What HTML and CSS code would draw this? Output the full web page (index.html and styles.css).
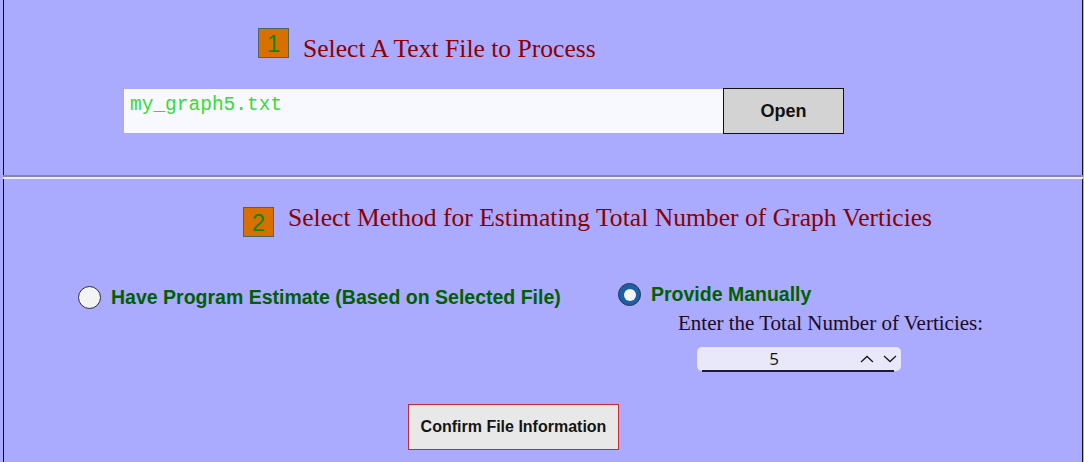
FILE: index.html
```html
<!DOCTYPE html>
<html lang="en">
<head>
<meta charset="utf-8">
<title>Graph File</title>
<link rel="stylesheet" href="styles.css">
</head>
<body>
<div class="page">
  <section class="sec sec1">
    <div class="step step1">
      <span class="badge">1</span>
      <span class="step-title">Select A Text File to Process</span>
    </div>
    <div class="file-row">
      <div class="file-field">my_graph5.txt</div>
      <button class="open-btn" type="button">Open</button>
    </div>
  </section>
  <div class="sep"></div>
  <section class="sec sec2">
    <div class="step step2">
      <span class="badge">2</span>
      <span class="step-title">Select Method for Estimating Total Number of Graph Verticies</span>
    </div>
    <div class="options">
      <div class="opt opt1">
        <span class="radio"></span>
        <span class="opt-label">Have Program Estimate (Based on Selected File)</span>
      </div>
      <div class="opt2">
        <div class="opt">
          <span class="radio checked"><span class="dot"></span></span>
          <span class="opt-label">Provide Manually</span>
        </div>
        <div class="enter-label">Enter the Total Number of Verticies:</div>
        <div class="num">
          <span class="num-val">5</span>
          <span class="spin">
            <svg width="14" height="8" viewBox="0 0 14 8"><polyline points="1,7 7,1.5 13,7" fill="none" stroke="#1a1a1a" stroke-width="1.3"/></svg>
            <svg width="14" height="8" viewBox="0 0 14 8"><polyline points="1,1 7,6.5 13,1" fill="none" stroke="#1a1a1a" stroke-width="1.3"/></svg>
          </span>
        </div>
      </div>
    </div>
    <button class="confirm-btn" type="button">Confirm File Information</button>
  </section>
</div>
</body>
</html>
```
FILE: styles.css
```css
html, body {
  margin: 0;
  padding: 0;
  background: #aaaaff;
}
body {
  height: 462px;
  overflow: hidden;
}
.page {
  margin-left: 3px;
  width: 1080px;
}
.sec {
  border-left: 1px solid #111;
  border-right: 1px solid #111;
  box-sizing: border-box;
}
.sec1 {
  height: 175px;
  padding-top: 28px;
}
.sep {
  height: 4px;
  box-sizing: border-box;
  border-top: 2px solid #8585a6;
  border-bottom: 2px solid #ececff;
}
.sec2 {
  height: 283px;
  padding-top: 28px;
}
.step {
  display: flex;
  align-items: flex-start;
  height: 30px;
}
.step1 { margin-left: 254px; }
.step2 { margin-left: 239px; }
.badge {
  box-sizing: border-box;
  flex: 0 0 31px;
  width: 31px;
  height: 30px;
  background: #d87000;
  border: 1px solid #4d6464;
  color: #0a8a0a;
  font-family: "Liberation Sans", Arial, sans-serif;
  font-size: 24px;
  line-height: 27px;
  padding-top: 1px;
  text-align: center;
}
.step-title {
  font-family: "Liberation Serif", "Times New Roman", serif;
  font-size: 25.6px;
  line-height: 29px;
  color: #8b0000;
  white-space: nowrap;
}
.step1 .step-title { margin-left: 14px; margin-top: 6px; }
.step2 .step-title { margin-left: 14px; margin-top: -4px; }

.file-row {
  display: flex;
  align-items: center;
  margin-left: 120px;
  margin-top: 30px;
}
.file-field {
  box-sizing: border-box;
  width: 599px;
  height: 44px;
  background: #f8f8ff;
  padding: 5px 6px 0;
  font-family: "Liberation Mono", "Courier New", monospace;
  font-size: 19.5px;
  color: #33dd33;
}
.open-btn {
  box-sizing: border-box;
  width: 121px;
  height: 46px;
  margin: 0;
  background: #d3d3d3;
  border: 1px solid #111;
  font-family: "Liberation Sans", Arial, sans-serif;
  font-weight: bold;
  font-size: 18px;
  color: #111;
  padding: 0;
}

.options {
  display: flex;
  align-items: flex-start;
  margin-left: 74px;
  margin-top: 46px;
}
.opt {
  display: flex;
  align-items: center;
  gap: 10px;
}
.opt1 {
  flex: 0 0 540px;
  margin-top: 3px;
}
.radio {
  box-sizing: border-box;
  width: 23px;
  height: 23px;
  border-radius: 50%;
  background: #f3f3f3;
  border: 1.5px solid #2a2a3a;
  display: flex;
  align-items: center;
  justify-content: center;
}
.radio.checked {
  background: #1b5fa6;
  border: 1.5px solid #2a3550;
}
.radio .dot {
  width: 12px;
  height: 12px;
  border-radius: 50%;
  background: #f5f5f5;
}
.opt-label {
  font-family: "Liberation Sans", Arial, sans-serif;
  font-weight: bold;
  font-size: 19.5px;
  color: #005f00;
}
.opt2 {
  display: flex;
  flex-direction: column;
  align-items: flex-start;
}
.enter-label {
  margin-left: 60px;
  margin-top: 6px;
  font-family: "Liberation Serif", "Times New Roman", serif;
  font-size: 21px;
  line-height: 23px;
  color: #1e0a24;
}
.num {
  position: relative;
  box-sizing: border-box;
  margin-left: 79px;
  margin-top: 12px;
  width: 204px;
  height: 24px;
  background: #e8e8fa;
  border-radius: 5px;
  display: flex;
  align-items: center;
}
.num::after {
  content: "";
  position: absolute;
  left: 5px;
  right: 7px;
  bottom: -1px;
  height: 2px;
  background: #1c1c30;
}
.num-val {
  width: 154px;
  text-align: center;
  font-family: "Open Sans", "Noto Sans", sans-serif;
  font-size: 17px;
  color: #111;
  line-height: 24px;
}
.spin {
  display: flex;
  gap: 9px;
  align-items: center;
  margin-left: 9px;
}
.confirm-btn {
  display: block;
  box-sizing: border-box;
  margin: 33px 0 0 404px;
  width: 211px;
  height: 46px;
  padding: 0;
  background: #e8e8e8;
  border: 1px solid #cc2a2a;
  font-family: "Liberation Sans", Arial, sans-serif;
  font-weight: bold;
  font-size: 16px;
  color: #141414;
}
```
